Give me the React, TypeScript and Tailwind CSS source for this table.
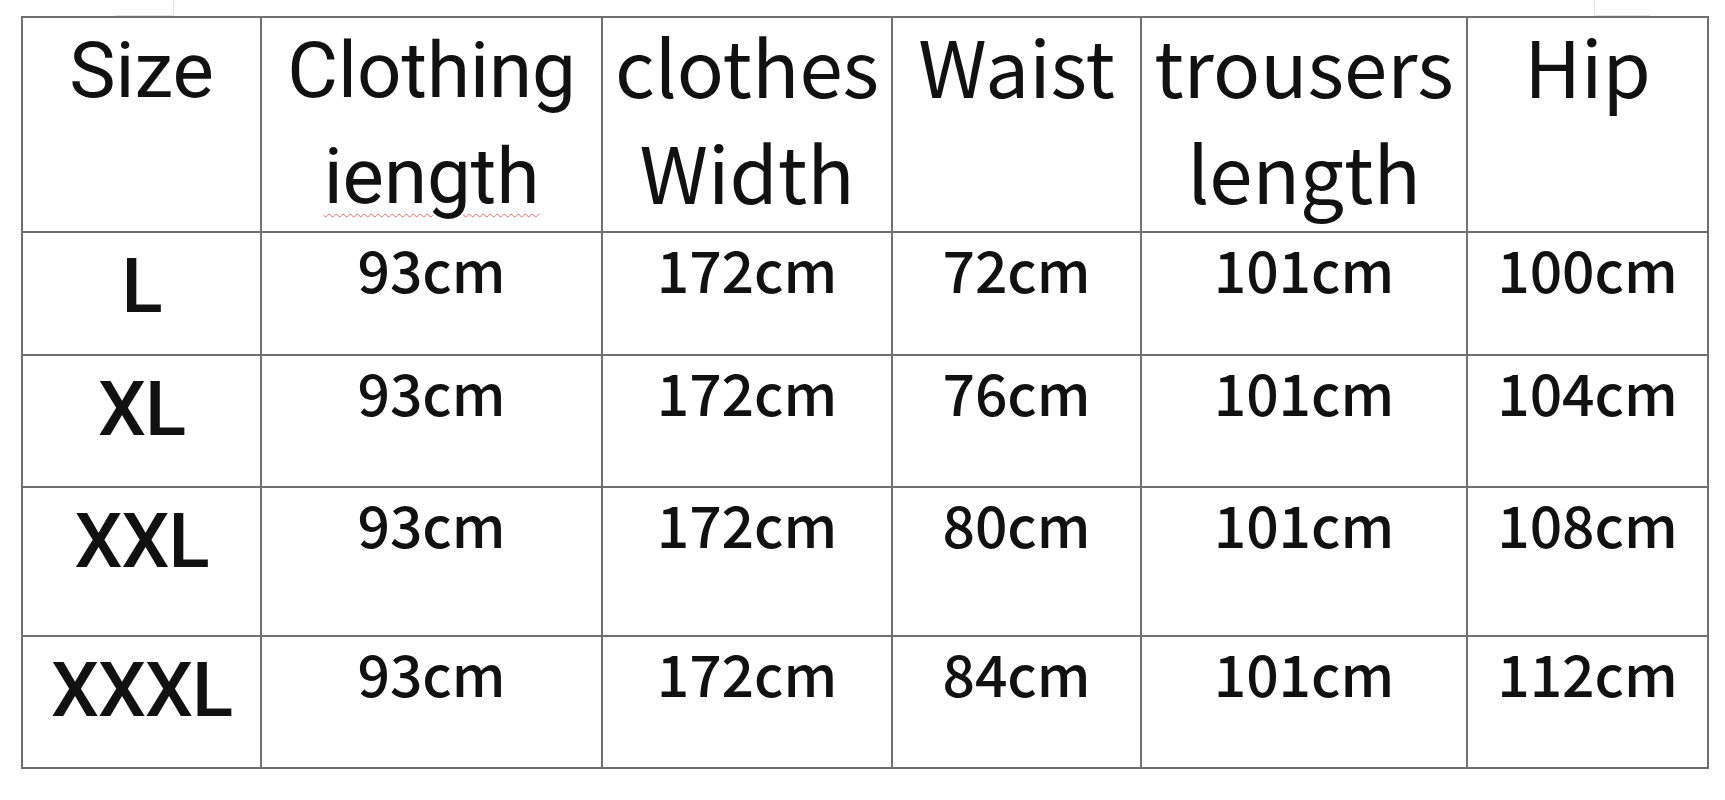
import React from "react";

const headerA = "font-['Roboto',sans-serif] text-[78px] leading-[106px]";
const headerB = "font-['Noto_Sans_CJK_SC',sans-serif] text-[78px] leading-[106px] -mt-[7px]";
const dataFont = "font-['Noto_Sans_CJK_SC',sans-serif] font-medium text-[57px] leading-none";
const sizeFont = "font-['Roboto',sans-serif] font-medium text-[76px] leading-none tracking-[-1px]";

const rows = [
  { size: "L", h: "h-[121px]", v: ["93cm", "172cm", "72cm", "101cm", "100cm"] },
  { size: "XL", h: "h-[130px]", v: ["93cm", "172cm", "76cm", "101cm", "104cm"] },
  { size: "XXL", h: "h-[147px]", v: ["93cm", "172cm", "80cm", "101cm", "108cm"] },
  { size: "XXXL", h: "h-[130px]", v: ["93cm", "172cm", "84cm", "101cm", "112cm"] },
];

function HeadB({ children }: { children: React.ReactNode }) {
  return (
    <div className="bg-white h-[213px] text-center">
      <div className={headerB}>{children}</div>
    </div>
  );
}

export default function App() {
  return (
    <div className="w-[1725px] h-[800px] bg-white text-[#111]">
      <div className="flex h-[16px]">
        <div className="w-[115px]" />
        <div className="w-[59px] h-full border-b border-r border-[#e4e4e4]" />
        <div className="w-[1420px]" />
        <div className="w-[56px] h-full border-b border-l border-[#e4e4e4]" />
      </div>
      <div className="ml-[21px] w-[1688px] p-[2px] bg-[#707070] grid grid-cols-[237px_339px_288px_247px_324px_239px] gap-[2px]">
        <div className={`bg-white h-[213px] text-center ${headerA}`}>Size</div>
        <div className={`bg-white h-[213px] text-center ${headerA}`}>
          Clothing
          <br />
          <span className="underline decoration-wavy decoration-[#dc6b6b] decoration-1 underline-offset-[10px]">iength</span>
        </div>
        <HeadB>
          clothes
          <br />
          Width
        </HeadB>
        <HeadB>Waist</HeadB>
        <HeadB>
          trousers
          <br />
          length
        </HeadB>
        <HeadB>Hip</HeadB>
        {rows.map((r) => (
          <React.Fragment key={r.size}>
            <div className={`bg-white ${r.h} text-center pt-[15px] ${sizeFont}`}>{r.size}</div>
            {r.v.map((val, i) => (
              <div key={i} className={`bg-white ${r.h} text-center pt-[7px] ${dataFont}`}>
                {val}
              </div>
            ))}
          </React.Fragment>
        ))}
      </div>
    </div>
  );
}
